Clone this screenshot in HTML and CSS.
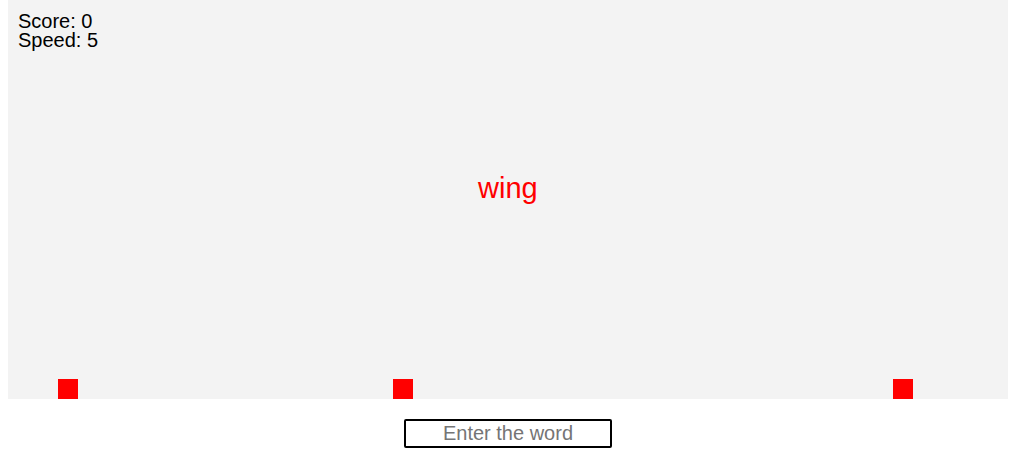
FILE: index.html
```html
<!DOCTYPE html>
<html>
<head>
<meta charset="utf-8">
<link rel="stylesheet" href="styles.css">
</head>
<body>
<div class="game">
  <div class="stats">
    <div>Score: 0</div>
    <div>Speed: 5</div>
  </div>
  <div class="word" style="left: 470px; top: 171px;">wing</div>
  <div class="block" style="left: 50px;"></div>
  <div class="block" style="left: 385px;"></div>
  <div class="block" style="left: 885px;"></div>
</div>
<div class="controls">
  <input class="entry" type="text" placeholder="Enter the word">
</div>
</body>
</html>
```
FILE: styles.css
```css
html, body {
  margin: 0;
  padding: 0;
  background: #fff;
}
body {
  padding: 0 8px;
  font-family: "Liberation Sans", Arial, sans-serif;
}
.game {
  position: relative;
  width: 1000px;
  height: 399px;
  background: #f3f3f3;
  overflow: hidden;
}
.stats {
  padding: 12px 10px 0;
  font-size: 20px;
  line-height: 19px;
  color: #000;
}
.word {
  position: absolute;
  font-size: 29px;
  line-height: 34px;
  color: #ff0000;
}
.block {
  position: absolute;
  bottom: 0;
  width: 20px;
  height: 20px;
  background: #ff0000;
}
.controls {
  width: 1000px;
  display: flex;
  justify-content: center;
  padding-top: 20px;
}
.entry {
  width: 208px;
  height: 29px;
  padding: 1px 2px;
  border: 2px solid #000;
  border-radius: 2px;
  box-sizing: border-box;
  font-family: "Liberation Sans", Arial, sans-serif;
  font-size: 20px;
  line-height: 23px;
  text-align: center;
  color: #000;
  background: #fff;
  outline: none;
}
.entry::placeholder {
  color: #757575;
}
```
